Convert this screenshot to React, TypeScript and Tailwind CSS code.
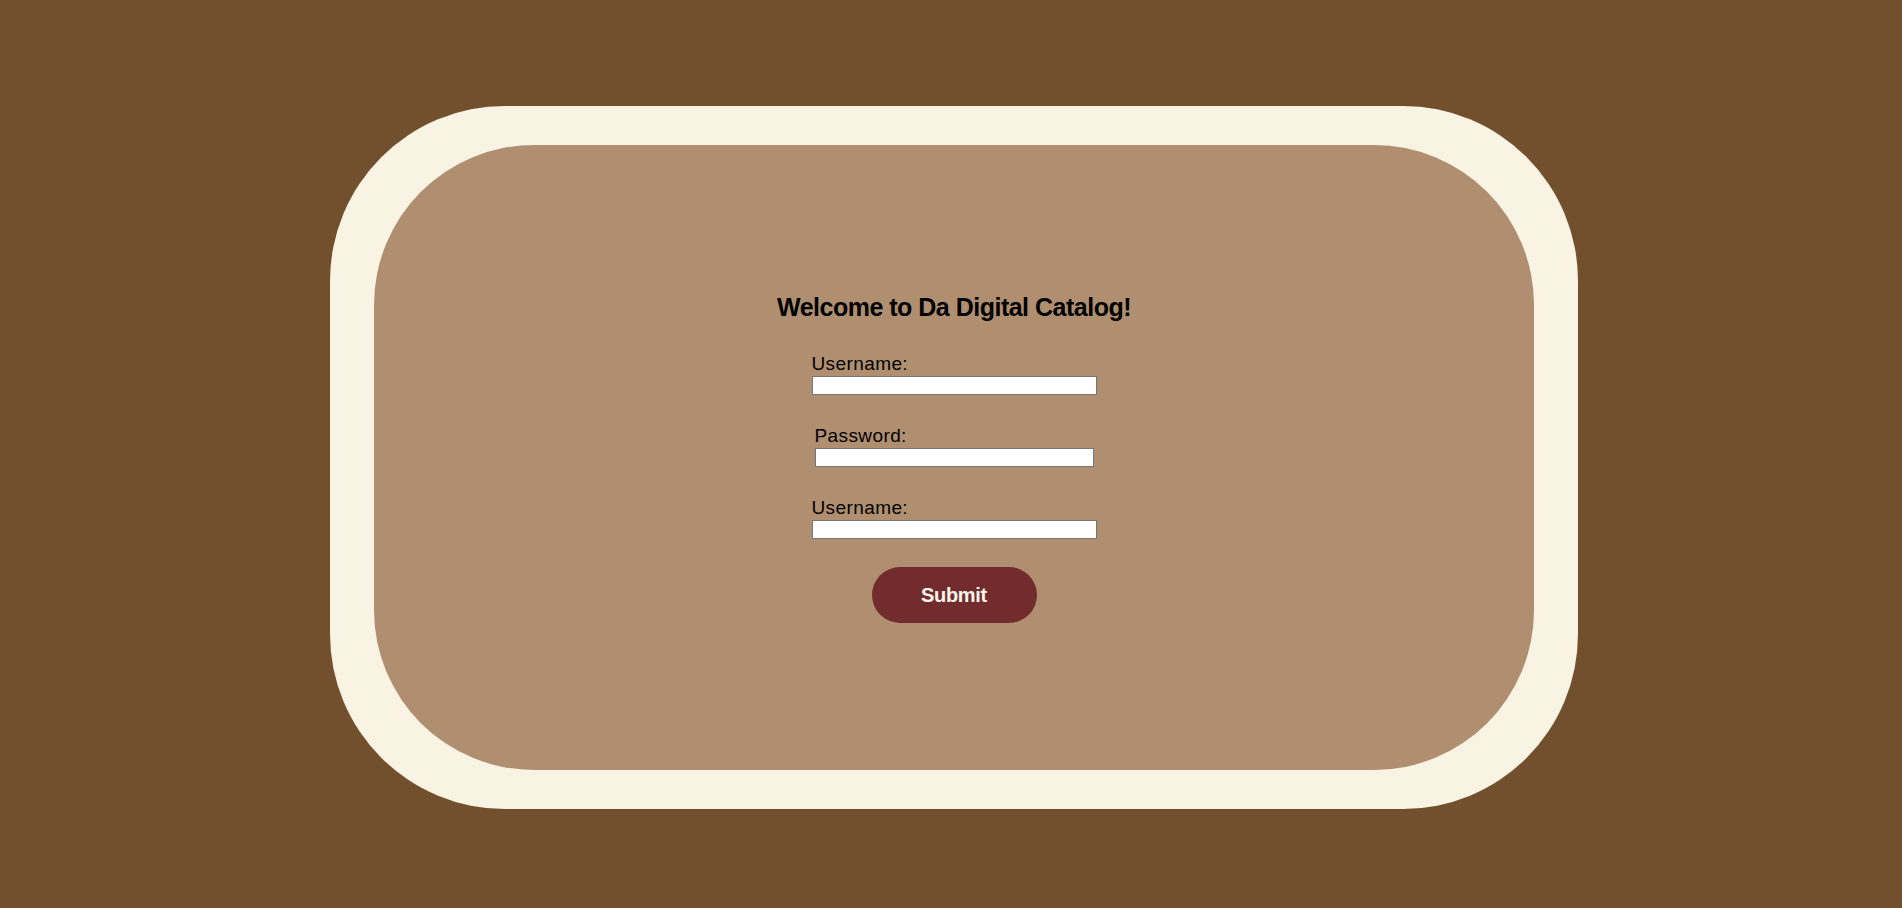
import { useState } from "react";

const fields = [
  { label: "Username:", type: "text", width: "w-[285px]" },
  { label: "Password:", type: "password", width: "w-[279px]" },
  { label: "Username:", type: "text", width: "w-[285px]" },
];

export default function App() {
  const [values, setValues] = useState(["", "", ""]);

  return (
    <div className="min-h-screen w-full bg-[#72502d] pt-[106px] font-['Liberation_Sans',Arial,sans-serif]">
      <div className="ml-[330px] w-[1248px] h-[703px] rounded-[175px] bg-[#f9f3e3] px-[44px] py-[39px]">
        <div className="h-full w-full rounded-[160px] bg-[#b08f70] flex flex-col items-center justify-center text-black">
          <h2 className="text-[25px] leading-[29px] font-bold tracking-[-0.5px]">
            Welcome to Da Digital Catalog!
          </h2>
          <form
            className="mt-[31px] flex flex-col items-center gap-[30px]"
            onSubmit={(e) => e.preventDefault()}
          >
            {fields.map((f, i) => (
              <label key={i} className={`flex flex-col ${f.width}`}>
                <span className="text-[19px] leading-[21px] tracking-[0.4px]">{f.label}</span>
                <input
                  type={f.type}
                  value={values[i]}
                  onChange={(e) => {
                    const next = [...values];
                    next[i] = e.target.value;
                    setValues(next);
                  }}
                  className="mt-[2px] h-[19px] w-full bg-white border border-[#767676] outline-none"
                />
              </label>
            ))}
            <button
              type="submit"
              className="-mt-[2px] w-[165px] h-[56px] rounded-full bg-[#722c2e] text-[#fbf6ea] text-[20px] font-bold tracking-[-0.3px]"
            >
              Submit
            </button>
          </form>
        </div>
      </div>
    </div>
  );
}
